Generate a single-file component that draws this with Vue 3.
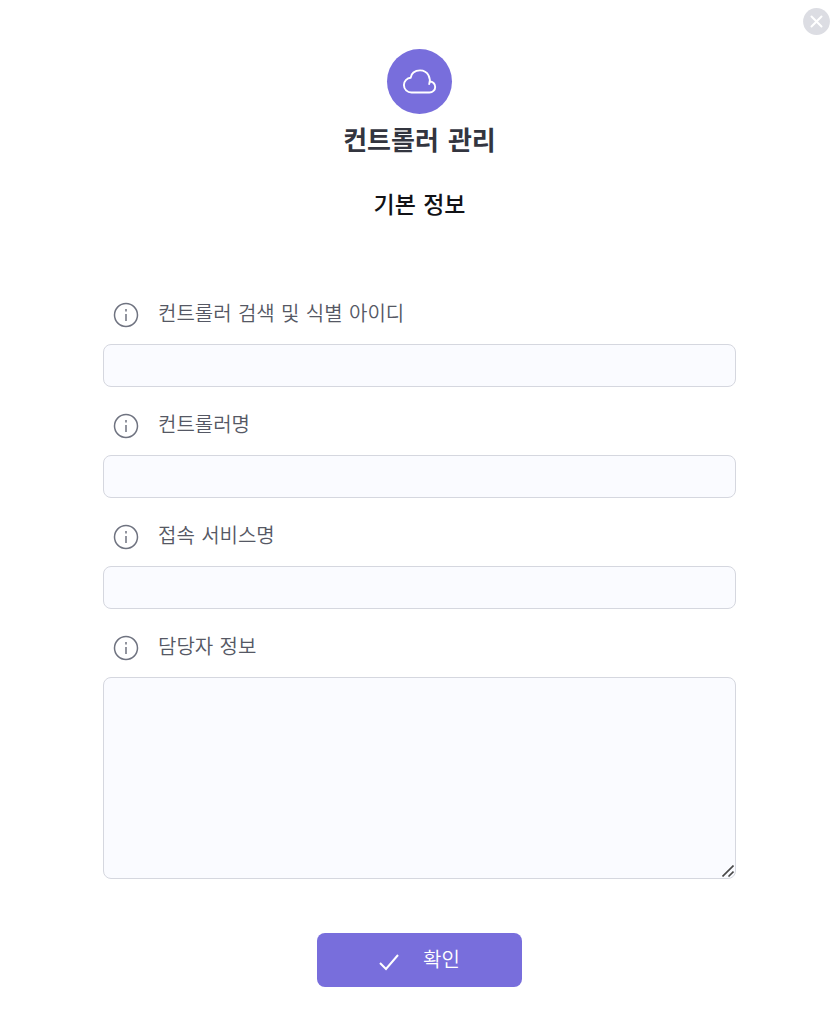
<script setup>
import { reactive } from 'vue'

const fields = [
  { id: 'controller-id', label: '컨트롤러 검색 및 식별 아이디' },
  { id: 'controller-name', label: '컨트롤러명' },
  { id: 'service-name', label: '접속 서비스명' },
  { id: 'manager-info', label: '담당자 정보', multiline: true }
]
const form = reactive(Object.fromEntries(fields.map((f) => [f.id, ''])))
</script>

<template>
  <main class="dialog">
    <button class="close" type="button" aria-label="닫기">
      <svg viewBox="0 0 27 27" width="27" height="27">
        <circle cx="13.5" cy="13.5" r="13.4" fill="#dcdde3" />
        <path d="M8.5 8.5l10 10M18.5 8.5l-10 10" stroke="#fff" stroke-width="2" stroke-linecap="round" />
      </svg>
    </button>

    <header class="header">
      <span class="badge">
        <svg class="cloud" viewBox="0 0 33 25" width="33" height="25" fill="none" stroke="#fff" stroke-width="1.9" stroke-linecap="round" stroke-linejoin="round">
          <path d="M26.2 15C28 10.3 25.7 1.4 17 1.4C11.6 1.4 8 4.8 7.7 8.8C3.9 9 0.9 12.2 0.9 16C0.9 20.2 4.3 23.5 8.5 23.5H26.4C29.6 23.5 32.2 21.1 32.2 17.9C32.2 14.8 29.7 12.5 26.8 12.5" />
        </svg>
      </span>
      <h1>컨트롤러 관리</h1>
      <h2>기본 정보</h2>
    </header>

    <form class="form" @submit.prevent>
      <div v-for="field in fields" :key="field.id" class="field">
        <label :for="field.id">
          <svg viewBox="0 0 26 26" width="26" height="26" fill="none" stroke="#6f7380" stroke-width="1.5">
            <circle cx="13" cy="13" r="11.5" />
            <path d="M13 12v7M13 7v2.6" />
          </svg>
          <span>{{ field.label }}</span>
        </label>
        <div v-if="field.multiline" class="area">
          <textarea :id="field.id" v-model="form[field.id]"></textarea>
          <svg class="grip" viewBox="0 0 12 12" width="12" height="12" stroke="#484848" stroke-width="1.6">
            <path d="M0.5 11.5L11.5 0.5M6.5 11.5L11.5 6.5" />
          </svg>
        </div>
        <input v-else :id="field.id" v-model="form[field.id]" type="text" />
      </div>

      <button class="submit" type="submit">
        <svg class="check" viewBox="0 0 20 18" width="20" height="18" fill="none" stroke="#fff" stroke-width="2">
          <path d="M1 10l6 6L19 2" />
        </svg>
        <span>확인</span>
      </button>
    </form>
  </main>
</template>

<style>
body {
  margin: 0;
  background: #fff;
}
</style>

<style scoped>
.dialog,
.dialog input,
.dialog textarea,
.dialog button {
  font-family: "DejaVu Sans", "Noto Sans CJK KR", sans-serif;
}
.dialog {
  position: relative;
  box-sizing: border-box;
  padding: 49px 104px 40px 103px;
}
.close {
  position: absolute;
  top: 8px;
  right: 10px;
  padding: 0;
  border: 0;
  background: none;
  cursor: pointer;
}
svg {
  display: block;
  flex: none;
}
.header {
  display: flex;
  flex-direction: column;
  align-items: center;
}
.badge {
  display: flex;
  align-items: center;
  justify-content: center;
  width: 65px;
  height: 65px;
  border-radius: 50%;
  background: #786edc;
}
.cloud {
  overflow: visible;
}
h1,
h2 {
  margin: 0;
}
h1 {
  margin-top: 9px;
  font-size: 26px;
  line-height: 36px;
  font-weight: 700;
  color: #33353f;
}
h2 {
  margin-top: 29px;
  font-size: 23px;
  line-height: 34px;
  font-weight: 500;
  color: #111216;
}
.form {
  display: flex;
  flex-direction: column;
  gap: 24px;
  margin-top: 78px;
}
.field {
  display: flex;
  flex-direction: column;
  gap: 16px;
}
label {
  display: flex;
  align-items: flex-end;
  gap: 19px;
  padding-left: 10px;
  font-size: 20px;
  line-height: 28px;
  font-weight: 350;
  color: #555864;
}
input,
textarea {
  box-sizing: border-box;
  width: 100%;
  margin: 0;
  padding: 8px 14px;
  border: 1px solid #d5d7df;
  border-radius: 8px;
  outline: none;
  background: #fafbff;
  font-size: 18px;
}
input {
  height: 43px;
}
.area {
  position: relative;
}
textarea {
  display: block;
  height: 202px;
  resize: vertical;
}
textarea::-webkit-resizer {
  background: transparent;
}
.grip {
  position: absolute;
  right: 2px;
  bottom: 2px;
  pointer-events: none;
}
.submit {
  display: flex;
  align-items: center;
  justify-content: center;
  align-self: center;
  gap: 24px;
  width: 205px;
  height: 54px;
  margin-top: 30px;
  padding: 0;
  border: 0;
  border-radius: 8px;
  background: #786edc;
  color: #fff;
  font-size: 20px;
  line-height: 28px;
  font-weight: 350;
  cursor: pointer;
}
.check {
  margin-top: 4px;
}
</style>
